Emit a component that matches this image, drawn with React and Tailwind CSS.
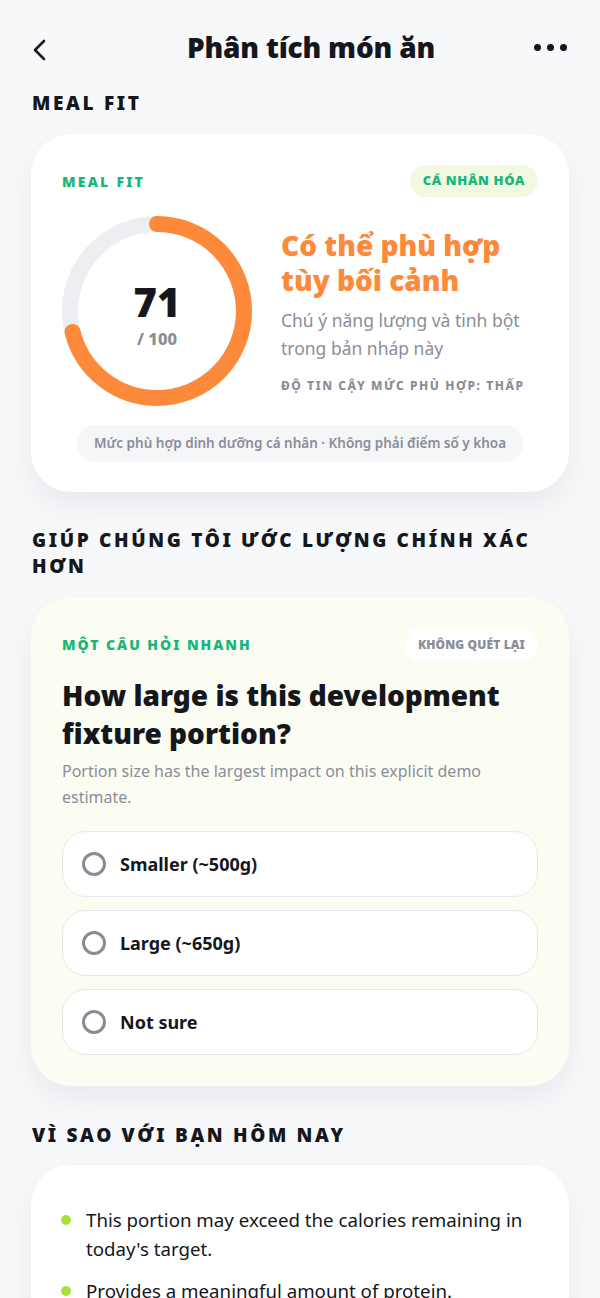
import React from "react";

function Ring({ value = 71 }) {
  const size = 190;
  const stroke = 16;
  const r = (size - stroke) / 2;
  const c = 2 * Math.PI * r;
  const off = c * (1 - value / 100);
  return (
    <div className="relative w-[190px] h-[190px] shrink-0">
      <svg width={size} height={size} viewBox={`0 0 ${size} ${size}`} className="-rotate-90">
        <circle cx={size / 2} cy={size / 2} r={r} fill="none" stroke="#eceef1" strokeWidth={stroke} />
        <circle
          cx={size / 2}
          cy={size / 2}
          r={r}
          fill="none"
          stroke="#fd8a3b"
          strokeWidth={stroke}
          strokeLinecap="round"
          strokeDasharray={c}
          strokeDashoffset={off}
        />
      </svg>
      <div className="absolute inset-0 flex flex-col items-center justify-center pt-[8px]">
        <div className="text-[40px] leading-[44px] font-black text-[#15171c]">71</div>
        <div className="text-[16.5px] leading-[22px] font-extrabold text-[#8b8d98] mt-[4px]">/ 100</div>
      </div>
    </div>
  );
}

function Option({ label }) {
  return (
    <div className="h-[66px] rounded-[24px] bg-white border border-[#e6e8ec] flex items-center pl-[19px] gap-[14px]">
      <div className="w-[24px] h-[24px] rounded-full border-[3px] border-[#8a8b95]" />
      <div className="text-[18px] font-bold text-[#15171c]">{label}</div>
    </div>
  );
}

export default function App() {
  return (
    <div
      className="min-h-[1298px] bg-[#f7f8fa] text-[#15171c] overflow-hidden"
      style={{ fontFamily: '"Noto Sans", "Open Sans", sans-serif' }}
    >
      {/* Header */}
      <div className="h-[92px] flex items-center justify-between px-[30px] pt-[6px]">
        <svg width="20" height="24" viewBox="0 0 20 24" className="mt-[2px]">
          <path d="M14 3 L5 12 L14 21" fill="none" stroke="#15171c" strokeWidth="2.6" strokeLinecap="round" strokeLinejoin="round" />
        </svg>
        <div className="text-[28px] font-black tracking-[-0.2px] -mt-[5px] pl-[38px]">Phân tích món ăn</div>
        <div className="flex gap-[6px] pr-[3px] -mt-[3px]">
          <span className="w-[7px] h-[7px] rounded-full bg-[#15171c]" />
          <span className="w-[7px] h-[7px] rounded-full bg-[#15171c]" />
          <span className="w-[7px] h-[7px] rounded-full bg-[#15171c]" />
        </div>
      </div>

      <div className="px-[31px]">
        <div className="text-[19px] leading-[26px] font-black tracking-[0.14em] -mt-[2px] mb-[18px] pl-[1px]">MEAL FIT</div>

        {/* Card 1 */}
        <div className="bg-white rounded-[40px] px-[31px] pt-[31px] pb-[30px] shadow-[0_14px_30px_rgba(20,25,40,0.06)]">
          <div className="flex items-center justify-between">
            <div className="text-[14px] font-black tracking-[0.16em] text-[#19b67b]">MEAL FIT</div>
            <div className="h-[32px] px-[13px] rounded-full bg-[#f1f9e1] flex items-center text-[13px] font-black tracking-[0.05em] text-[#19b67b]">
              CÁ NHÂN HÓA
            </div>
          </div>
          <div className="flex items-center gap-[29px] mt-[19px]">
            <Ring value={71} />
            <div className="flex flex-col">
              <div className="text-[28px] leading-[35px] font-black text-[#fd8a3b]">Có thể phù hợp tùy bối cảnh</div>
              <div className="text-[17.5px] leading-[28px] text-[#8b8d98] mt-[8px]">Chú ý năng lượng và tinh bột trong bản nháp này</div>
              <div className="text-[12px] font-extrabold tracking-[0.13em] text-[#8b8d98] mt-[15px]">ĐỘ TIN CẬY MỨC PHÙ HỢP: THẤP</div>
            </div>
          </div>
          <div className="flex justify-center mt-[19px]">
            <div className="h-[37px] px-[17px] rounded-full bg-[#f5f6f8] flex items-center text-[13.5px] font-semibold text-[#8b8d98]">
              Mức phù hợp dinh dưỡng cá nhân · Không phải điểm số y khoa
            </div>
          </div>
        </div>

        <div className="text-[19px] leading-[26px] font-black tracking-[0.14em] mt-[35px] mb-[18px] pl-[1px]">
          GIÚP CHÚNG TÔI ƯỚC LƯỢNG CHÍNH XÁC HƠN
        </div>

        {/* Card 2 */}
        <div className="bg-[#fbfdf3] rounded-[40px] px-[31px] pt-[30px] pb-[31px] shadow-[0_14px_30px_rgba(20,25,40,0.06)]">
          <div className="flex items-center justify-between">
            <div className="text-[14px] font-black tracking-[0.14em] text-[#19b67b]">MỘT CÂU HỎI NHANH</div>
            <div className="h-[35px] px-[13px] rounded-full bg-white flex items-center text-[12px] font-black tracking-[0.01em] text-[#8b8d98]">
              KHÔNG QUÉT LẠI
            </div>
          </div>
          <div className="text-[28px] leading-[38px] font-black mt-[14px]">How large is this development fixture portion?</div>
          <div className="text-[16px] leading-[26px] text-[#8b8d98] mt-[6px]">
            Portion size has the largest impact on this explicit demo estimate.
          </div>
          <div className="flex flex-col gap-[13px] mt-[21px]">
            <Option label="Smaller (~500g)" />
            <Option label="Large (~650g)" />
            <Option label="Not sure" />
          </div>
        </div>

        <div className="text-[19px] leading-[26px] font-black tracking-[0.14em] mt-[36px] mb-[17px] pl-[1px]">
          VÌ SAO VỚI BẠN HÔM NAY
        </div>

        {/* Card 3 */}
        <div className="bg-white rounded-[40px] px-[30px] pt-[40px] pb-[30px] shadow-[0_14px_30px_rgba(20,25,40,0.06)]">
          <div className="flex flex-col gap-[13px]">
            <div className="flex gap-[15px]">
              <span className="w-[10px] h-[10px] rounded-full bg-[#a6e33a] mt-[10px] shrink-0" />
              <span className="text-[18.7px] leading-[29px] text-[#15171c]">This portion may exceed the calories remaining in today's target.</span>
            </div>
            <div className="flex gap-[15px]">
              <span className="w-[10px] h-[10px] rounded-full bg-[#a6e33a] mt-[10px] shrink-0" />
              <span className="text-[18.7px] leading-[29px] text-[#15171c]">Provides a meaningful amount of protein.</span>
            </div>
          </div>
        </div>
      </div>
    </div>
  );
}
